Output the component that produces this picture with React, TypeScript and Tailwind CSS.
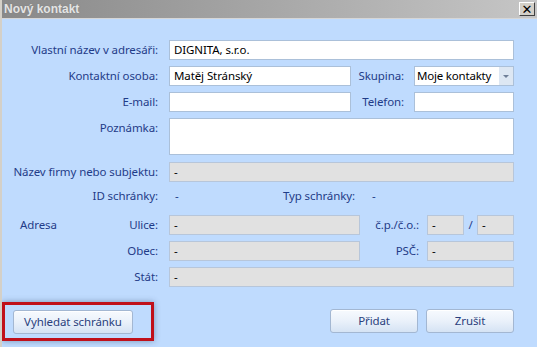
import React from "react";

const LABEL = "text-[#1f3c88] whitespace-nowrap";

function Box({
  w,
  value = "",
  disabled = false,
  h = 20,
}: {
  w: string;
  value?: string;
  disabled?: boolean;
  h?: number;
}) {
  return (
    <div
      className={`${w} shrink-0 border flex items-center px-[4px] text-black whitespace-nowrap overflow-hidden ${
        disabled ? "bg-[#e1e1e1] border-[#b7c6da]" : "bg-white border-[#abc0d9]"
      } ${h === 20 ? "h-[20px]" : "h-[37px] items-start pt-[2px]"}`}
    >
      {value}
    </div>
  );
}

function Button({ label, w }: { label: string; w: string }) {
  return (
    <button
      className={`${w} h-[24px] rounded-[3px] border border-[#a3b7d2] bg-gradient-to-b from-[#f7fafe] via-[#eaf1fa] to-[#d5e3f4] text-[#2a3f7d] shadow-[inset_0_1px_0_#ffffff]`}
    >
      {label}
    </button>
  );
}

export default function App() {
  return (
    <div className="w-[537px] h-[347px] overflow-hidden bg-[#bfdbfe] border-l-2 border-[#d4d0c8] text-[11.5px] tracking-[-0.1px] leading-none font-['Noto_Sans',sans-serif]">
      {/* Title bar */}
      <div className="h-[19px] flex items-center justify-between bg-gradient-to-r from-[#898989] to-[#c6c6c6] border-b border-[#d6d6d6]">
        <span className="pl-[2px] font-bold text-[12px] tracking-normal text-[#e4e4e4] font-['Liberation_Sans',sans-serif] [text-shadow:0_0_1px_#777]">
          Nový kontakt
        </span>
        <div className="mr-[2px] w-[16px] h-[14px] flex items-center justify-center bg-[#d4d0c8] border border-t-white border-l-white border-r-[#404040] border-b-[#404040] text-black text-[13px] font-bold font-['DejaVu_Sans',sans-serif]">
          ✕
        </div>
      </div>

      <div className="flex flex-col">
        {/* Vlastní název */}
        <div className="flex items-center mt-[21px]">
          <div className={`w-[156px] text-right ${LABEL}`}>Vlastní název v adresáři:</div>
          <div className="ml-[11px]">
            <Box w="w-[345px]" value="DIGNITA, s.r.o." />
          </div>
        </div>

        {/* Kontaktní osoba / Skupina */}
        <div className="flex items-center mt-[6px]">
          <div className={`w-[156px] text-right ${LABEL}`}>Kontaktní osoba:</div>
          <div className="ml-[11px]">
            <Box w="w-[182px]" value="Matěj Stránský" />
          </div>
          <div className={`w-[53px] text-right ${LABEL}`}>Skupina:</div>
          <div className="ml-[10px] w-[100px] h-[20px] border border-[#abc0d9] bg-white flex items-center">
            <span className="flex-1 pl-[2px] text-black whitespace-nowrap tracking-[-0.2px]">Moje kontakty</span>
            <div className="w-[14px] h-[18px] bg-[#dde7f3] flex items-center justify-center shrink-0">
              <div className="w-0 h-0 border-l-[3px] border-r-[3px] border-t-[3px] border-l-transparent border-r-transparent border-t-[#6f7f98]" />
            </div>
          </div>
        </div>

        {/* E-mail / Telefon */}
        <div className="flex items-center mt-[6px]">
          <div className={`w-[156px] text-right ${LABEL}`}>E-mail:</div>
          <div className="ml-[11px]">
            <Box w="w-[182px]" />
          </div>
          <div className={`w-[53px] text-right ${LABEL}`}>Telefon:</div>
          <div className="ml-[10px]">
            <Box w="w-[100px]" />
          </div>
        </div>

        {/* Poznámka */}
        <div className="flex items-start mt-[6px]">
          <div className={`w-[156px] text-right pt-[4px] ${LABEL}`}>Poznámka:</div>
          <div className="ml-[11px]">
            <Box w="w-[345px]" h={37} />
          </div>
        </div>

        {/* Název firmy */}
        <div className="flex items-center mt-[7px]">
          <div className={`w-[156px] text-right ${LABEL}`}>Název firmy nebo subjektu:</div>
          <div className="ml-[11px]">
            <Box w="w-[345px]" value="-" disabled />
          </div>
        </div>

        {/* ID / Typ schránky */}
        <div className="flex items-center mt-[4px] h-[20px]">
          <div className={`w-[156px] text-right ${LABEL}`}>ID schránky:</div>
          <div className="w-[197px] flex justify-between items-center">
            <span className="pl-[17px] text-[#1f3c88]">-</span>
            <span className={LABEL}>Typ schránky:</span>
          </div>
          <span className="ml-[17px] text-[#1f3c88]">-</span>
        </div>

        {/* Adresa – Ulice */}
        <div className="flex items-center mt-[9px]">
          <div className="w-[156px] flex justify-between">
            <span className={`pl-[18px] ${LABEL}`}>Adresa</span>
            <span className={LABEL}>Ulice:</span>
          </div>
          <div className="ml-[11px]">
            <Box w="w-[191px]" value="-" disabled />
          </div>
          <div className={`w-[59px] text-right ${LABEL}`}>č.p./č.o.:</div>
          <div className="ml-[8px] flex items-center">
            <Box w="w-[37px]" value="-" disabled />
            <span className="w-[13px] text-center text-[#1f3c88]">/</span>
            <Box w="w-[37px]" value="-" disabled />
          </div>
        </div>

        {/* Obec / PSČ */}
        <div className="flex items-center mt-[6px]">
          <div className={`w-[156px] text-right ${LABEL}`}>Obec:</div>
          <div className="ml-[11px]">
            <Box w="w-[191px]" value="-" disabled />
          </div>
          <div className={`w-[59px] text-right ${LABEL}`}>PSČ:</div>
          <div className="ml-[8px]">
            <Box w="w-[87px]" value="-" disabled />
          </div>
        </div>

        {/* Stát */}
        <div className="flex items-center mt-[6px]">
          <div className={`w-[156px] text-right ${LABEL}`}>Stát:</div>
          <div className="ml-[11px]">
            <Box w="w-[345px]" value="-" disabled />
          </div>
        </div>

        {/* Buttons */}
        <div className="flex items-center mt-[15px]">
          <div className="w-[152px] h-[39px] border-[3px] border-[#c0101a] shadow-[0_0_6px_rgba(40,60,90,0.45)] flex items-center pl-[8px]">
            <Button label="Vyhledat schránku" w="w-[120px]" />
          </div>
          <div className="ml-[176px] flex gap-[8px] mt-[-2px]">
            <Button label="Přidat" w="w-[88px]" />
            <Button label="Zrušit" w="w-[88px]" />
          </div>
        </div>
      </div>
    </div>
  );
}
